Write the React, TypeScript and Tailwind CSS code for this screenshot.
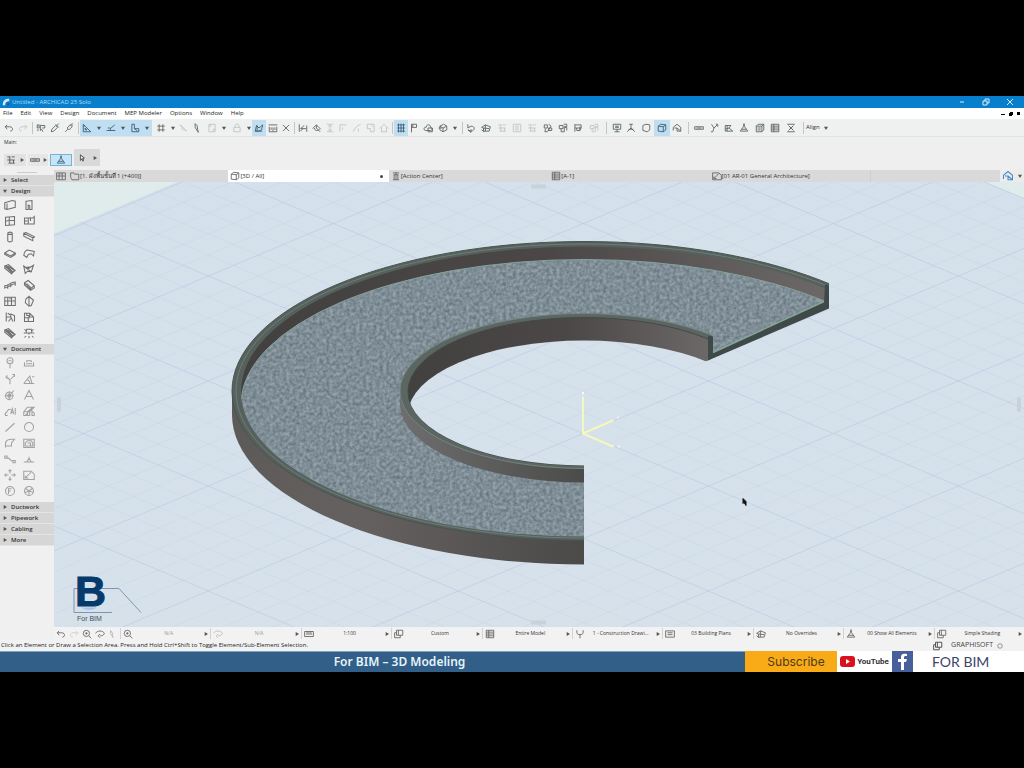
import clsx from "clsx";

type GlyphProps = {
    d: string;
    className?: string;
};

const icons: Record<string, string> = {
    undo: "M5 3 2 6l3 4M2 6h7c6 0 6 7 1 7",
    redo: "M11 3l3 3-3 4M14 6H7c-6 0-6 7-1 7",
    pick: "M2 3h3v5H2zM7 3v9l2-2 2 4M8 4h6v4h-4M3 10v3",
    dropper: "M2 14l1-4 6-6 3 3-6 6zM9 2l5 5M11 4l3-3",
    syringe: "M2 14l4-4M5 8l5-5 3 3-5 5zM10 3l4-2M12 5l2-2",
    ruler: "M2 2v12h12zM5 8v3h3zM2 5h2",
    snap: "M1 12h14M7 12V9l7-6M3 8h4",
    guide: "M3 2v12h11V9H7V2zM7 9l5 4",
    grid: "M5 2v12M11 2v12M2 5h12M2 11h12",
    slash: "M2 3l5 3-1 3 8 4M4 3l9 9",
    pen: "M5 1l3 3 2 11M5 1v6l5 8",
    box: "M3 2h10v12H3zM6 2v3H3M13 10h-3v4",
    lock: "M3 7h10v7H3zM5 7V4c0-3 6-3 6 0v3",
    trace: "M2 13l2-9 4 4 6-5-2 8-5 2zM2 13h11M5 4v8",
    measure: "M1 3h14M2 6v8h12V6M5 7v4M8 7v6M11 7v4",
    cross: "M3 3l10 10M13 3L3 13",
    trim: "M2 2v12M14 4v10M4 9l6-5M4 9h9M4 13l4-4",
    roof: "M1 9l6-6 7 7M7 3v5l6 6M4 8c0 5 6 5 8 2",
    split: "M3 2h10M3 14h10M8 4v8M5 6l3-3 3 3M5 10l3 3 3-3",
    corner: "M3 14V3h10M7 7v4",
    curve: "M2 14C4 8 8 4 14 2M10 9v5",
    sheet: "M2 2h11v12H7M2 2v7h5v5M9 5h2",
    home: "M1 9l7-7 7 7M4 7v7h8V7",
    mesh: "M2 3h12M2 8h12M2 13h12M4 1v14M8 1v14M12 1v14",
    flag: "M4 15V2h8v5H4M6 2v5",
    cloud: "M5 12C0 12 1 6 5 7c0-6 8-5 7 0 4 1 3 5 0 5zM8 8h7v6H8z",
    cube: "M3 5l6-3 5 3v6l-6 3-5-3zM3 5l5 3 6-3M8 8v6M1 8h5",
    rotate: "M3 2v6l5-3c7 0 7 7 0 8l-5-2M8 10v5l-5-4",
    house3d: "M1 7l6-4 8 3-2 7H4V8zM7 3v10M4 8l9 1M1 11l4 3",
    list: "M2 3h5M9 3h5M2 8h12M4 13h10M6 3v10M12 8v5",
    listbox: "M2 2h12v12H2zM5 5h6M5 8h6M5 11h6",
    edit: "M2 3h5v5H2zM9 2l4 3-6 9H3l1-5M9 8h5v4H9z",
    align: "M2 4h6v5H2zM9 2h5v4H9M5 9v5h5V7h4v5",
    flagbox: "M3 2v12M3 3h10v5H3M6 8v4h5V6M13 8l-3 5",
    monitor: "M2 2h12v8H2zM8 10v4M4 14h8M5 5h6M5 7h6",
    tripod: "M8 2v6l-6 6M8 8l6 6M5 2h6M4 10h8",
    hexagon: "M3 4l5-2 6 1v8l-4 3-7-2z",
    cube2: "M2 5l4-3 8 1v8l-4 3-8-1zM2 5l8 1 4-3M10 6v8",
    walk: "M2 12V7l6-5 6 5v6H8V8H4M8 8l6 5",
    level: "M1 6h14v4H1zM4 8h8",
    wye: "M4 2l4 6 5-5M8 8l-2 6H3M11 2h3v4",
    fold: "M2 4h9L8 8l6 5H2zM2 10l6-2M5 4v9",
    cone: "M8 1l1 5 5 7H2l5-7zM4 10h8",
    stack: "M5 2h9v9l-3 3H2V5zM2 5h9v9M11 5l3-3M4 8h5M4 11h5",
    table: "M2 2h12v12H2zM2 5h12M2 8h12M2 11h12M6 2v12",
    sigma: "M2 2h12M2 14h12M4 4l8 8M12 4l-8 8M6 8h4",
    folder: "M1 3h5l1 2h7v9H3L1 10z",
    tower: "M3 3h10M4 6h8M5 6v8M8 2v12M11 6v8M3 14h10",
    wall: "M1 5l10-3 4 1v8L4 14l-3-1zM4 6v8",
    door: "M4 3l8-1v12H9V9L7 8v6H4z",
    window: "M2 3l12-1v11L2 14zM2 8l12-1M7 3v11",
    panel: "M2 4h11l2-2v10H2zM7 4v8M10 3v5M2 8h4",
    column: "M5 3c0-2 6-2 6 0v10c0 2-6 2-6 0zM5 3c0 2 6 2 6 0",
    beam: "M1 3l12 6v4L1 7zM1 3l3-1 12 6-3 1",
    slab: "M1 8l6-4 8 4-6 4zM1 8v2l8 4 6-4V8",
    shell: "M1 11c1-5 3-7 5-7l9 2-1 6-3-3-4 1-2 4z",
    stair: "M1 4l5-2 9 8-4 3zM3 4l9 8M5 4l9 6M1 4v3l10 8",
    mesh3d: "M1 4l5 4 8-5-3 9-5-1-3 3zM6 8l5 4M3 6l8-1",
    rail: "M1 13V9c5 0 7-5 14-5v5M5 8v5M9 6v5M1 11c6 0 8-4 14-5",
    object: "M2 5l5-3 8 7-5 4zM2 5v3l8 7 5-3V9M5 6l6 6",
    curtain: "M1 3h14v11H1zM5 3v11M10 3v11M1 8h14M7 5h2",
    morph: "M8 1v14M8 2l6 5-3 7-3 1-5-5 1-5z",
    chair: "M3 2v12M3 8h6l3 6M9 8V4l5 2v8M5 3l3 2M9 10l-3 4",
    zone: "M2 3h7l5 5v6H2zM2 9h5v5M9 3v5h5M5 3v3h3v4",
    lamp: "M5 3h6l1 5H4zM2 3l2 2M14 3l-2 2M8 8v2M1 8h2M13 8h2M4 12l-2 2M12 12l2 2M8 12v3",
    pin: "M8 15V9M4 5a4 4 0 108 0 4 4 0 10-8 0M6 5h4",
    dim: "M1 12h14M2 12V7M14 12V7M5 7V5h6v2M4 9h8",
    spot: "M8 15V9L2 5M4 3v4h3M9 8l5-5M11 2h3v3",
    angle: "M1 14h14M1 14L9 4l3 10M5 9c3 0 4 2 4 5M12 5h3",
    radial: "M2 9a5 5 0 1010 0 5 5 0 10-10 0M5 9a2 2 0 104 0 2 2 0 10-4 0M7 9l6-7M1 9h11M7 3v12",
    text: "M2 14L8 2l6 12M4 10h8",
    label: "M1 13l5-7h3M9 12l2-7 2 7M10 10h3M2 10v4h3M15 4v9",
    fill: "M1 14V9l5-6h9L9 9v5zM3 14l10-11M6 14V9l6-5M1 9h8M12 8l3 3v3h-3z",
    line: "M2 14L14 3",
    circle: "M2 8a6 6 0 1012 0 6 6 0 10-12 0",
    arc: "M2 14V8c1-4 4-5 8-5h4l-4 5v4H2",
    drawing: "M1 3h14v11H1zM3 12V8l3-3h5l2 3v4zM6 8h4v4",
    spline: "M1 4h3v3H1zM4 6c5 1 4 5 8 5M12 10h3v3h-3z",
    hotspot: "M1 12h14M5 12l3-5 3 5M8 5v3",
    move: "M8 1v5M8 10v5M1 8h5M10 8h5M6 3l2-2 2 2M6 13l2 2 2-2M3 6L1 8l2 2M13 6l2 2-2 2",
    figure: "M1 3h10l4 4v7H1zM3 12l8-8M3 9v3h4",
    section: "M2 8a6 6 0 1012 0 6 6 0 10-12 0M6 12V5h4M6 8h3",
    camera: "M2 8a6 6 0 1012 0 6 6 0 10-12 0M4 5l4 3 5-4M8 8v6M3 10l5-2 6 2",
    zoom: "M2 7a5 5 0 1010 0 5 5 0 10-10 0M11 11l4 4M5 7h4M7 5v4",
    orbit: "M1 7c2-5 12-5 14 0-1 3-4 4-7 4M8 8l-3 3 3 3",
    scale: "M1 4h14v8H1zM3 8h10M5 4v3M8 4v3M11 4v3",
    layers: "M4 2h10v8H4zM1 6v8h9v-4M4 6H1M7 2v8",
    mail: "M1 3h14v10H1zM4 6h8M4 9h8",
    fork: "M3 2v4c0 4 10 4 10 0V2M8 9v6",
};

function Glyph({ d, className = "size-3" }: GlyphProps) {
    return (
        <svg viewBox="0 0 16 16" className={clsx("shrink-0", className)} fill="none" stroke="currentColor" strokeWidth="1.4" aria-hidden="true">
            <path d={icons[d]} />
        </svg>
    );
}

type Tool = {
    icon: string;
    w: string;
    on?: boolean;
    faint?: boolean;
};

const t = (icon: string, w = "w-3.5", state = ""): Tool => ({ icon, w, on: state === "on", faint: state === "faint" });

// "|" is a separator, "v" is the drop-down arrow of the tool before it
const tools: Tool[] = [
    t("undo"), t("redo", "w-3.5", "faint"), t("|", "w-1"),
    t("pick"), t("dropper"), t("syringe"), t("|", "w-1"),
    t("ruler", "w-3.5", "on"), t("v", "w-2.5", "on"), t("snap", "w-3.5", "on"), t("v", "w-2.5", "on"), t("guide", "w-3.5", "on"), t("v", "w-2.5", "on"),
    t("grid", "w-4.5"), t("v", "w-1.5"), t("slash", "w-3.5", "faint"), t("pen"), t("box", "w-4", "faint"), t("v", "w-2"),
    t("lock", "w-4.5", "faint"), t("v", "w-1.5"), t("trace", "w-3.5", "on"), t("measure"), t("cross", "w-3"), t("|", "w-1"),
    t("trim"), t("roof"), t("split", "w-3", "faint"), t("corner", "w-3.5", "faint"), t("curve", "w-3.5", "faint"), t("sheet", "w-3.5", "faint"), t("home", "w-3", "faint"), t("|", "w-1"),
    t("mesh", "w-3.5", "on"), t("flag", "w-3"), t("cloud", "w-4"), t("cube"), t("v", "w-2.5"), t("|", "w-1"),
    t("rotate"), t("house3d", "w-4"), t("list", "w-4", "faint"), t("listbox", "w-3.5", "faint"), t("list", "w-4", "faint"),
    t("edit", "w-4"), t("align"), t("flagbox", "w-4"), t("align", "w-4", "faint"), t("|", "w-2"),
    t("monitor"), t("tripod"), t("hexagon", "w-4"), t("cube2", "w-4", "on"), t("walk"), t("|", "w-2"),
    t("level"), t("wye", "w-4"), t("fold"), t("cone", "w-4"), t("stack", "w-4"), t("table"), t("sigma", "w-4.5"), t("|", "w-1.5"),
];

const menus = ["File", "Edit", "View", "Design", "Document", "MEP Modeler", "Options", "Window", "Help"];

const designTools = ["wall", "door", "window", "panel", "column", "beam", "slab", "shell", "stair", "mesh3d", "rail", "object", "curtain", "morph", "chair", "zone", "stair", "lamp"];
const documentTools = ["pin", "dim", "spot", "angle", "radial", "text", "label", "fill", "line", "circle", "arc", "drawing", "spline", "hotspot", "move", "figure", "section", "camera"];

const tabs = [
    { icon: "folder", label: "[1. ผังพื้นชั้นที่ 1 (+400)]" },
    { icon: "cube2", label: "[3D / All]", active: true },
    { icon: "tower", label: "[Action Center]" },
    { icon: "table", label: "[A-1]" },
    { icon: "figure", label: "[01 AR-01 General Architecture]" },
];

const quickOptions = [
    { icon: "zoom", label: "N/A", faint: true },
    { icon: "orbit", label: "N/A", faint: true },
    { icon: "scale", label: "1:100" },
    { icon: "layers", label: "Custom" },
    { icon: "table", label: "Entire Model" },
    { icon: "fork", label: "1 - Construction Drawi..." },
    { icon: "mail", label: "03 Building Plans" },
    { icon: "house3d", label: "No Overrides" },
    { icon: "cone", label: "00 Show All Elements" },
    { icon: "layers", label: "Simple Shading" },
];

function Arrow({ right = false }: { right?: boolean }) {
    return (
        <svg viewBox="0 0 6 6" className="size-1 shrink-0 text-[#555]" fill="currentColor" aria-hidden="true">
            <path d={right ? "M1 0l5 3-5 3z" : "M0 1h6L3 6z"} />
        </svg>
    );
}

function TitleBar() {
    return (
        <header className="flex h-3 shrink-0 items-center bg-[#087fcd] px-0.5 text-[6px] text-[#b5dcf5]">
            <svg viewBox="0 0 10 10" className="mr-0.5 size-2" aria-hidden="true">
                <path d="M1 9C1 3 4 1 9 1v3C6 4 4 5 4 9z" fill="#dcecff" />
                <path d="M6 9c0-2 1-3 3-3v3z" fill="#2b50a0" />
            </svg>
            <h1 className="flex-1">Untitled - ARCHICAD 25 Solo</h1>
            <div className="flex items-center gap-4 pr-2 text-[#d8eefc]">
                <button aria-label="Minimize"><svg viewBox="0 0 8 8" className="size-2" stroke="currentColor"><path d="M2 4h4" /></svg></button>
                <button aria-label="Restore"><svg viewBox="0 0 8 8" className="size-2" fill="none" stroke="currentColor"><path d="M1 3h4v4H1zM3 3V1h4v4H5" /></svg></button>
                <button aria-label="Close"><svg viewBox="0 0 8 8" className="size-2" stroke="currentColor"><path d="M1 1l6 6M7 1L1 7" /></svg></button>
            </div>
        </header>
    );
}

function MenuBar() {
    return (
        <nav className="flex h-[11px] shrink-0 items-center gap-2 bg-white px-[3px] text-[6px] text-[#222]">
            {menus.map((m) => (
                <button key={m}>{m}</button>
            ))}
            <div className="ml-auto flex items-center gap-1 text-black">
                <button aria-label="Minimize document"><svg viewBox="0 0 4 4" className="size-1" fill="currentColor"><path d="M0 2h4v1H0z" /></svg></button>
                <button aria-label="Restore document"><svg viewBox="0 0 4 4" className="size-1" fill="currentColor"><path d="M0 1h3v3H0zM1 0h3v3H1z" /></svg></button>
                <button aria-label="Close document"><svg viewBox="0 0 4 4" className="size-1" fill="currentColor"><path d="M0 0h3v3H0z" /></svg></button>
            </div>
        </nav>
    );
}

function Toolbar() {
    return (
        <div role="toolbar" aria-label="Standard" className="flex h-[18px] shrink-0 items-center border-b border-[#e2e3e4] bg-[#eff0f0] pl-0.5">
            {tools.map((tool, i) => {
                if (tool.icon === "|") {
                    return (
                        <span key={i} className={clsx("flex shrink-0 justify-center", tool.w)}>
                            <span className="h-3 w-px bg-[#c4c4c4]" />
                        </span>
                    );
                }
                return (
                    <button
                        key={i}
                        aria-label={tool.icon === "v" ? "More" : tool.icon}
                        className={clsx(
                            "flex h-4 shrink-0 items-center justify-center",
                            tool.w,
                            tool.on ? "bg-[#bfdef2] text-[#3d5a6d]" : tool.faint ? "text-[#c2c2c2]" : "text-[#5e6163]"
                        )}
                    >
                        {tool.icon === "v" ? <Arrow /> : <Glyph d={tool.icon} className="size-2.5" />}
                    </button>
                );
            })}
            <button className="flex items-center gap-1 text-[6px] text-[#333]">
                Align <Arrow />
            </button>
        </div>
    );
}

function InfoBox() {
    return (
        <div className="h-[33px] shrink-0 bg-[#efefef] pl-1 text-[5px] text-[#333]">
            <p className="h-3 leading-[10px]">Main:</p>
            <div className="flex h-[21px] items-center gap-0.5 text-[#555]">
                <button aria-label="Selection settings" className="flex h-3 w-[22px] items-center justify-around bg-[#e2e2e2]">
                    <Glyph d="list" className="size-2.5" /><Arrow right />
                </button>
                <button aria-label="Geometry method" className="flex h-3 w-5 items-center justify-around bg-[#e6e6e6]">
                    <Glyph d="level" className="size-2.5" /><Arrow right />
                </button>
                <button aria-label="Quick selection" className="flex h-3 w-[22px] items-center justify-center border border-[#74b4d8] bg-[#c8e5f5] text-[#39647c]">
                    <Glyph d="cone" className="size-2.5" />
                </button>
                <button aria-label="Arrow tool" className="flex h-[17px] w-[26px] items-center justify-around self-start bg-[#d9d9d9] text-[#333]">
                    <svg viewBox="0 0 8 10" className="size-2" fill="#eee" stroke="currentColor"><path d="M2 1v7l2-2 1 3 1-1-1-3h2z" /></svg>
                    <Arrow right />
                </button>
            </div>
        </div>
    );
}

function SectionHeader({ label, open = false }: { label: string; open?: boolean }) {
    return (
        <button aria-expanded={open} className="flex h-[11px] w-full items-center gap-1 border-b border-[#e4e4e4] bg-[#d6d6d6] pl-[3px] text-[6px] font-semibold text-[#333]">
            <Arrow right={!open} />
            {label}
        </button>
    );
}

function ToolGrid({ names, faint = false }: { names: string[]; faint?: boolean }) {
    return (
        <div className={clsx("grid w-[39px] grid-cols-2 pb-[3px]", faint ? "text-[#a2a2a2]" : "text-[#707070]")}>
            {names.map((n, i) => (
                <button key={i} aria-label={n} className="flex h-4 items-center justify-center">
                    <Glyph d={n} />
                </button>
            ))}
        </div>
    );
}

function Toolbox() {
    return (
        <aside className="w-[54px] shrink-0 bg-[#f0f0f0]">
            <div className="flex h-[5px] items-center justify-center"><span className="h-px w-5 bg-[#ccc]" /></div>
            <SectionHeader label="Select" />
            <SectionHeader label="Design" open />
            <ToolGrid names={designTools} />
            <SectionHeader label="Document" open />
            <ToolGrid names={documentTools} faint />
            <SectionHeader label="Ductwork" />
            <SectionHeader label="Pipework" />
            <SectionHeader label="Cabling" />
            <SectionHeader label="More" />
        </aside>
    );
}

function TabBar() {
    return (
        <div role="tablist" className="flex h-3 shrink-0 bg-[#d9d9d9] text-[6px] text-[#333]">
            <button aria-label="Tab overview" className="flex w-[14px] items-center justify-center text-[#666]">
                <Glyph d="curtain" className="size-2.5" />
            </button>
            {tabs.map((tab) => (
                <button
                    key={tab.label}
                    role="tab"
                    aria-selected={!!tab.active}
                    className={clsx("flex min-w-0 flex-[160] items-center whitespace-nowrap px-0.5", tab.active && "bg-white")}
                >
                    <Glyph d={tab.icon} className="size-2.5 text-[#666]" />
                    <span>{tab.label}</span>
                    {tab.active && <span className="mr-1 ml-auto size-[3px] rounded-full bg-[#444]" />}
                </button>
            ))}
            <div className="flex-[132] border-l border-[#cfcfcf]" />
            <button aria-label="Navigator" className="flex w-6 items-center justify-around bg-[#ececec] text-[#4d8bc5]">
                <Glyph d="walk" />
                <Arrow />
            </button>
        </div>
    );
}

const range = (from: number, to: number) => Array.from({ length: to - from + 1 }, (_, i) => from + i);

function GridLines() {
    // both families share one slope, a bold line every fifth step
    return (
        <g stroke="#aebce0">
            {range(-16, 45).map((i) => {
                const up = 259 + i * 21;
                const down = -21 + (i - 20) * 21;
                const bold = i % 5 === 0;
                return (
                    <g key={i} strokeWidth={1} opacity={bold ? 0.42 : 0.16}>
                        <path d={`M0 ${up}L1100 ${up - 462}`} />
                        <path d={`M0 ${down}L1100 ${down + 462}`} />
                    </g>
                );
            })}
        </g>
    );
}

function Ramp() {
    return (
        <g clipPath="url(#cut)">
            <g mask="url(#hole)">
                <path d="M232 391V415A352 150 0 0 0 584 565V391Z" fill="url(#outer)" />
                <ellipse cx="584" cy="391.5" rx="352" ry="149.5" fill="#56615d" stroke="#49544f" />
                <ellipse cx="584" cy="391.5" rx="348" ry="147" fill="none" stroke="#6c7d76" strokeWidth="1" />
                <ellipse cx="584" cy="392" rx="343" ry="145" fill="url(#inner)" />
                <g clipPath="url(#rim)">
                    <ellipse cx="584" cy="405" rx="343" ry="145" fill="#95a3ab" />
                    <ellipse cx="584" cy="405" rx="343" ry="145" filter="url(#speckle)" />
                    <ellipse cx="584" cy="405" rx="343" ry="145" fill="none" stroke="#86a09b" />
                </g>
                <g clipPath="url(#curb)">
                    <path d="M400 391V405A184 78 0 0 0 584 483V391Z" fill="url(#curbface)" />
                    <ellipse cx="584" cy="391.5" rx="184" ry="77.5" fill="#5b6662" stroke="#72857e" />
                    <ellipse cx="584" cy="392" rx="176" ry="74" fill="url(#inner)" stroke="#424a47" />
                </g>
            </g>
            <path d="M824 302L713 353V337L708 336V361L829 309V286L825 285Z" fill="#3f4a48" />
            <path d="M713 353L824 302" stroke="#87a59a" strokeWidth="1.5" />
        </g>
    );
}

function ModelView() {
    return (
        <svg
            viewBox="54 182 970 446"
            preserveAspectRatio="xMidYMid slice"
            className="min-h-0 w-full flex-1 bg-[#e0ebeb]"
            role="img"
            aria-label="3D view of a curved ramp"
        >
            <defs>
                <linearGradient id="ground" x1="0" y1="0" x2="0" y2="1">
                    <stop offset="0" stopColor="#d4e0eb" />
                    <stop offset="1" stopColor="#d7e2ea" />
                </linearGradient>
                <linearGradient id="outer" x1="0" y1="0" x2="1" y2="0">
                    <stop offset="0" stopColor="#5c5a58" />
                    <stop offset="0.35" stopColor="#656160" />
                    <stop offset="1" stopColor="#4b4a49" />
                </linearGradient>
                <linearGradient id="curbface" x1="0" y1="0" x2="1" y2="0">
                    <stop offset="0" stopColor="#6d6e6d" />
                    <stop offset="1" stopColor="#4b4b4a" />
                </linearGradient>
                <linearGradient id="inner" x1="0" y1="0" x2="1" y2="0">
                    <stop offset="0" stopColor="#424140" />
                    <stop offset="0.45" stopColor="#4b4746" />
                    <stop offset="0.85" stopColor="#6b6867" />
                </linearGradient>
                <filter id="speckle" colorInterpolationFilters="sRGB">
                    <feTurbulence type="fractalNoise" baseFrequency="0.3" numOctaves="2" seed="4" />
                    <feColorMatrix values="0 0 0 0 0.3  0 0 0 0 0.36  0 0 0 0 0.4  1.1 0 0 0 -0.25" />
                    <feComposite in2="SourceGraphic" operator="in" />
                </filter>
                <clipPath id="rim"><ellipse cx="584" cy="392" rx="343" ry="145" /></clipPath>
                <clipPath id="curb"><path d="M200 200H712V391H584V600H200Z" /></clipPath>
                <clipPath id="cut"><path d="M200 200H829V309L708 361L584 400V600H200Z" /></clipPath>
                <clipPath id="opening"><ellipse cx="584" cy="392" rx="176" ry="74" /></clipPath>
                <mask id="hole" maskUnits="userSpaceOnUse" x="200" y="200" width="700" height="400">
                    <path d="M200 200H900V600H200Z" fill="#fff" />
                    <ellipse cx="584" cy="415" rx="176" ry="74" fill="#000" clipPath="url(#opening)" />
                </mask>
            </defs>
            <path d="M-200 340L178 182V100H800L985 182L1224 282V900H-200Z" fill="url(#ground)" />
            <GridLines />
            <path d="M-200 340L178 182V100H-200ZM985 182L1224 282V100H985Z" fill="#e0ebeb" />
            <Ramp />
            <g stroke="#f5f7bd" strokeWidth="2" strokeLinecap="round">
                <path d="M583 434V398M583 434L613 421M583 434L613 447" />
                <path d="M583 393v1M618 418v0M619 447v0" stroke="#fafbe6" />
            </g>
            <path d="M743 499v5l1-1 2 3v-4z" fill="#111" stroke="#111" />
            <g fill="#c9d1d9">
                <path d="M531 185h15v4h-15zM531 621h15v4h-15zM57 398h4v14h-4zM1017 398h4v14h-4z" />
            </g>
            <path d="M74 613V589H119L141 613M74 613H112" fill="none" stroke="#8195b0" />
            <path d="M81 608q8 5 16 0z" fill="#a9c2f0" />
            <text fontWeight="700" fontFamily="'Liberation Sans', sans-serif">
                <tspan x="75" y="606" fontSize="43" fill="#063a6b" stroke="#063a6b" strokeWidth="1">B</tspan>
                <tspan x="77" y="621" fontSize="7" fontWeight="400" fill="#444e58">For BIM</tspan>
            </text>
        </svg>
    );
}

function QuickOptions() {
    return (
        <div className="flex h-[13px] shrink-0 items-center bg-[#f2f2f2] text-[5px] text-[#333]">
            <div className="flex w-[66px] shrink-0 items-center justify-between pr-1 pl-0.5 text-[#666]">
                <button aria-label="Previous zoom"><Glyph d="undo" className="size-2.5" /></button>
                <button aria-label="Next zoom" className="text-[#ccc]"><Glyph d="redo" className="size-2.5" /></button>
                <button aria-label="Zoom in"><Glyph d="zoom" className="size-2.5" /></button>
                <button aria-label="Orbit"><Glyph d="orbit" className="size-2.5" /></button>
                <button aria-label="Explore" className="text-[#aaa]"><Glyph d="pen" className="size-2" /></button>
            </div>
            {quickOptions.map((o, i) => (
                <button key={i} className="flex h-[11px] min-w-0 flex-1 items-center border-l border-[#d2d2d2] px-0.5 whitespace-nowrap">
                    <Glyph d={o.icon} className={clsx("size-2.5", i === 1 ? "text-[#bbb]" : "text-[#666]")} />
                    <span className={clsx("min-w-0 flex-1 text-center", o.faint && "text-[#999]")}>{o.label}</span>
                    <Arrow right />
                </button>
            ))}
        </div>
    );
}

function StatusBar() {
    return (
        <footer className="flex h-[11px] shrink-0 items-center bg-[#f2f2f2] px-px text-[6px] text-[#222]">
            <p className="flex-1">Click an Element or Draw a Selection Area. Press and Hold Ctrl+Shift to Toggle Element/Sub-Element Selection.</p>
            <div className="flex items-center gap-1 pr-5 text-[#444]">
                <Glyph d="layers" className="mr-1 size-2.5" />
                <span className="text-[7px]">GRAPHISOFT</span>
                <Glyph d="circle" className="size-1.5" />
            </div>
        </footer>
    );
}

function Banner() {
    return (
        <div className="flex h-[21px] shrink-0 bg-white font-['Noto_Sans',sans-serif]">
            <div className="flex flex-1 items-center justify-center border-t border-[#7fa3c3] bg-[#315f88] pl-[54px] text-[12px] font-semibold text-[#e6f3fb]">
                For BIM – 3D Modeling
            </div>
            <button className="w-[92px] bg-[#f8ab16] pl-2.5 font-['Inter',sans-serif] text-[12px] text-[#4d3a1c]">Subscribe</button>
            <a href="#youtube" className="flex w-[55px] items-center justify-center gap-0.5 text-[#333]">
                <svg viewBox="0 0 15 11" className="h-[11px] w-[15px] shrink-0" aria-hidden="true">
                    <rect width="15" height="11" rx="3" fill="#d9111d" />
                    <path d="M6 3l4 2.500-4 2.500z" fill="#fff" />
                </svg>
                <span className="font-['Roboto',sans-serif] text-[8px] font-bold">YouTube</span>
            </a>
            <a href="#facebook" aria-label="Facebook" className="flex w-[21px] justify-center bg-[#475f9b]">
                <svg viewBox="0 0 21 21" className="h-full" aria-hidden="true">
                    <path d="M9 19v-8H6V8h3V6c0-3 2-4 6-3v2c-3 0-3 0-3 3h3l-1 3h-2v8z" fill="#fff" />
                </svg>
            </a>
            <div className="flex w-[111px] items-center pl-[19px] font-['Lato',sans-serif] text-[14px] text-[#3d4468]">FOR BIM</div>
        </div>
    );
}

export default function App() {
    return (
        <div className="flex min-h-screen items-center bg-black font-['Open_Sans','Noto_Sans',sans-serif]">
            <main className="flex aspect-video w-full flex-col overflow-hidden bg-[#f0f0f0]">
                <TitleBar />
                <MenuBar />
                <Toolbar />
                <InfoBox />
                <div className="flex min-h-0 flex-1">
                    <Toolbox />
                    <div className="flex min-w-0 flex-1 flex-col">
                        <TabBar />
                        <ModelView />
                        <QuickOptions />
                    </div>
                </div>
                <StatusBar />
                <Banner />
            </main>
        </div>
    );
}
